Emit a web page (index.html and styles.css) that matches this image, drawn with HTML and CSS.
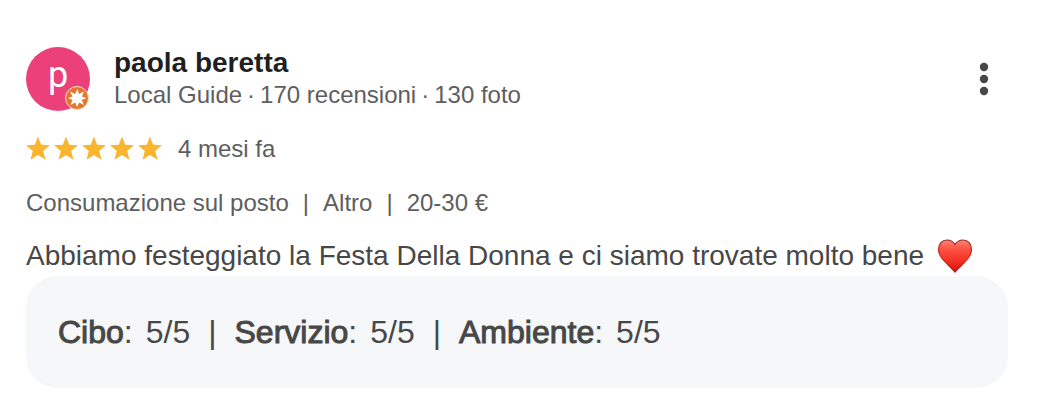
FILE: index.html
```html
<!DOCTYPE html>
<html lang="it">
<head>
<meta charset="utf-8">
<meta name="viewport" content="width=device-width, initial-scale=1">
<title>Recensione di paola beretta</title>
<link rel="stylesheet" href="styles.css">
</head>
<body>
<article class="review">
  <header class="author">
    <div class="avatar">
      <span class="initial">p</span>
      <svg class="badge" viewBox="0 0 26 26" aria-hidden="true">
        <circle cx="13" cy="13" r="11.5" fill="#e2762a" stroke="#fde3d3" stroke-width="1"/>
        <path fill="#fff" d="M13.500 4l1.500 5 5-2.500-2 5 4.500 1.700-4.700 1.500 2 5.300-4.500-2.500L13 22l-1.800-4.500L6.500 20l2-5L4 13l4.500-1.500L6 6.500l5 2.500z"/>
      </svg>
    </div>
    <div class="identity">
      <h1 class="name">paola beretta</h1>
      <p class="meta"><span>Local Guide</span><span>·</span><span>170 recensioni</span><span>·</span><span>130 foto</span></p>
    </div>
    <button class="menu" type="button" aria-label="Altre azioni">
      <svg class="dots" viewBox="0 0 10 34" aria-hidden="true"><circle cx="5" cy="5" r="4.200"/><circle cx="5" cy="17" r="4.200"/><circle cx="5" cy="29" r="4.200"/></svg>
    </button>
  </header>
  <div class="rating">
    <svg class="stars" viewBox="0 0 138 26" role="img" aria-label="5 stelle su 5">
      <defs><path id="star" d="M13 .5l3.200 8.300 8.800.5-6.800 5.700 2.300 8.700L13 18.900 5.500 23.700l2.300-8.700L1 9.300l8.800-.5z"/></defs>
      <use href="#star"/><use href="#star" x="28"/><use href="#star" x="56"/><use href="#star" x="84"/><use href="#star" x="112"/>
    </svg>
    <span>4 mesi fa</span>
  </div>
  <p class="details"><span>Consumazione sul posto</span><span>|</span><span>Altro</span><span>|</span><span>20-30 €</span></p>
  <p class="comment">Abbiamo festeggiato la Festa Della Donna e ci siamo trovate molto bene
    <svg class="heart" viewBox="0 0 36 34" role="img" aria-label="cuore">
      <defs>
        <linearGradient id="red" x1="0" y1="0" x2="0" y2="1"><stop offset="0" stop-color="#ff8272"/><stop offset=".3" stop-color="#fb5142"/><stop offset=".7" stop-color="#f32c20"/><stop offset="1" stop-color="#c9150d"/></linearGradient>
        <linearGradient id="rim" x1="0" y1="0" x2="0" y2="1"><stop offset="0" stop-color="#8c2a28"/><stop offset=".5" stop-color="#d52a22"/><stop offset="1" stop-color="#b8160f"/></linearGradient>
      </defs>
      <path fill="url(#red)" stroke="url(#rim)" stroke-width="1.200" d="M18 5.500C16 2.200 13 1 10 1 5 1 1.500 5 1.500 10.500 1.500 19 11 25 18 33 25 25 34.500 19 34.500 10.500 34.500 5 31 1 26 1 23 1 20 2.200 18 5.500z"/>
    </svg>
  </p>
  <section class="scores">
    <p class="score"><span><span class="label">Cibo</span>:</span><span>5/5</span></p><span>|</span>
    <p class="score"><span><span class="label">Servizio</span>:</span><span>5/5</span></p><span>|</span>
    <p class="score"><span><span class="label">Ambiente</span>:</span><span>5/5</span></p>
  </section>
</article>
</body>
</html>
```
FILE: styles.css
```css
* { box-sizing: border-box; }
body { margin: 0; background: #fff; color: #5e5e5e; font: 24px/32px "Liberation Sans", Arial, sans-serif; }
h1, p { margin: 0; }
.review { padding: 47px 30px 30px 26px; }
.author { display: flex; align-items: center; gap: 24px; }
.avatar { position: relative; flex: none; width: 64px; height: 64px; border-radius: 50%; background: #ec407a; color: #fff; text-align: center; }
.initial { font: 36px/56px Roboto, sans-serif; }
.badge { position: absolute; right: 0; bottom: 0; width: 26px; height: 26px; }
.identity { flex: 1; }
.name { color: #1f1f1f; font-size: 28px; line-height: 32px; }
.meta { display: flex; flex-wrap: wrap; column-gap: 5px; }
.menu { padding: 0 19px; border: 0; background: none; }
.dots { display: block; width: 10px; height: 34px; fill: #474747; }
.rating { display: flex; align-items: center; gap: 15px; margin-top: 22px; }
.stars { width: 138px; height: 26px; margin-left: -1px; fill: #f9b52d; }
.details { display: flex; flex-wrap: wrap; column-gap: 14px; margin-top: 22px; }
.comment { display: flex; align-items: center; gap: 13px; margin-top: 17px; color: #474747; font-size: 28px; line-height: 40px; }
.heart { width: 36px; height: 34px; flex: none; }
.scores { display: flex; flex-wrap: wrap; column-gap: 18px; padding: 36px 32px; border-radius: 32px; background: #f6f7f9; color: #474747; font-size: 32px; line-height: 40px; }
.score { display: flex; gap: 13px; }
.label { -webkit-text-stroke: 1px currentColor; }
```
